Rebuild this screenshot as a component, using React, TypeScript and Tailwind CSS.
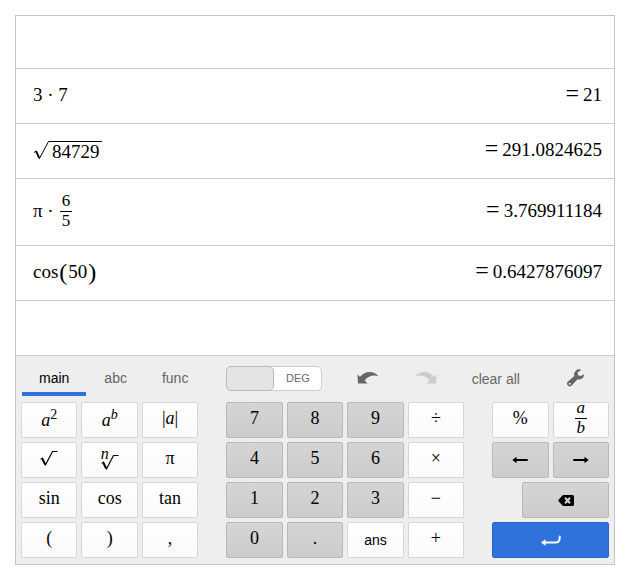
import React from "react";

const SERIF = "font-['Liberation_Serif',serif]";

function Undo({ flip = false }: { flip?: boolean }) {
  return (
    <svg width="22" height="14" viewBox="0 0 22 14" fill="currentColor" className={flip ? "-scale-x-100" : ""} aria-hidden="true">
      <path d="M0.5 3.5 L3 5.8 C7 0.5 16 -1.5 21.3 5 C16.5 3.6 11 4.6 7.6 9.6 L10.5 12.5 L1 12.5 Z" />
    </svg>
  );
}

function Wrench() {
  return (
    <svg width="18" height="18" viewBox="0 0 18 18" aria-hidden="true">
      <path
        fill="currentColor"
        fillRule="evenodd"
        d="M14.2 0.9 A5 5 0 0 0 7.3 6.9 L1 12.6 A2.6 2.6 0 0 0 4.7 16.6 L10.6 10.3 A5 5 0 0 0 17 5.2 L13.6 7 L11 6.3 L10.6 3.6 Z M2.8 13.7 a1 1 0 1 1 0 2 a1 1 0 0 1 0 -2 Z"
      />
    </svg>
  );
}

function KeyRadical() {
  return (
    <svg width="18" height="17" viewBox="0 0 18 17" fill="none" stroke="#000" aria-hidden="true">
      <path d="M0.5 9.2 L2.5 8" strokeWidth="1" />
      <path d="M2 8 L5.2 14.5" strokeWidth="2" />
      <path d="M5.2 15.5 L12.5 1.5 H17.5" strokeWidth="1.2" />
    </svg>
  );
}

function RootSign() {
  return (
    <svg width="17" height="19" viewBox="0 0 17 19" fill="none" stroke="#000" aria-hidden="true">
      <path d="M1 11.5 L3.2 10" strokeWidth="1" />
      <path d="M3 10 L6.2 16.8" strokeWidth="1.8" />
      <path d="M6.2 18 L15.5 0.5 H17" strokeWidth="1" />
    </svg>
  );
}

function Arrow({ flip = false }: { flip?: boolean }) {
  return (
    <svg width="16" height="8" viewBox="0 0 16 8" className={flip ? "-scale-x-100" : ""} aria-hidden="true">
      <path d="M3 4 H15" stroke="#000" strokeWidth="2" strokeLinecap="round" />
      <path d="M0.3 4 L4.5 0.8 V7.2 Z" fill="#000" />
    </svg>
  );
}

function Backspace() {
  return (
    <svg width="16" height="11" viewBox="0 0 16 11" aria-hidden="true">
      <path d="M5 0 H14.5 Q16 0 16 1.5 V9.5 Q16 11 14.5 11 H5 L0.3 6 V5 Z" fill="#000" />
      <path d="M7 2.8 L12 8.2 M12 2.8 L7 8.2" stroke="#d4d4d4" strokeWidth="2" />
    </svg>
  );
}

function Enter() {
  return (
    <svg width="20" height="11" viewBox="0 0 20 11" aria-hidden="true">
      <path d="M3 7.5 H15 Q18.8 7.5 18.8 1.5" fill="none" stroke="#fff" strokeWidth="2" strokeLinecap="round" />
      <path d="M0 7.5 L4.5 4.3 V10.7 Z" fill="#fff" />
    </svg>
  );
}

function Fraction({ top, bottom, italic = false }: { top: string; bottom: string; italic?: boolean }) {
  return (
    <span className={`inline-flex flex-col items-center text-[17px] leading-4 ${italic ? "italic" : ""}`}>
      <span className="border-b border-black px-0.5 pb-0.5">{top}</span>
      <span className="px-0.5 pt-px">{bottom}</span>
    </span>
  );
}

const light = "border-[#d8d8d8] from-white to-[#fafafa]";
const dark = "border-[#b8b8b8] from-[#d5d5d5] to-[#cccccc]";
const blue = "border-[#2766c8] from-[#2f72dc] to-[#2f72dc]";

type KeyProps = { children: React.ReactNode; tone?: string; place?: string; font?: string; label?: string };

function Key({ children, tone = light, place = "", font = `${SERIF} text-lg pb-1`, label }: KeyProps) {
  return (
    <button
      type="button"
      aria-label={label}
      className={`flex h-9 items-center justify-center rounded-xs border bg-linear-to-b leading-5 text-black ${tone} ${place} ${font}`}
    >
      {children}
    </button>
  );
}

function Row({ children, result, tall = false }: { children: React.ReactNode; result: string; tall?: boolean }) {
  return (
    <li className={`flex items-center justify-between border-b border-[#cccccc] pr-3 pb-0.5 pl-[17px] ${tall ? "h-[67px]" : "h-[55px]"}`}>
      <span className="flex items-center">{children}</span>
      <output className="flex items-baseline gap-1">
        <span className="text-2xl leading-5">=</span>
        <span>{result}</span>
      </output>
    </li>
  );
}

export default function App() {
  return (
    <main className="py-[15px] pr-4 pl-[15px] font-['Liberation_Sans',sans-serif]">
      <div className="border border-[#c4c4c4] bg-white">
        <ol className={`${SERIF} text-[19px] leading-6 text-black`}>
          <li className="h-[53px] border-b border-[#cccccc]" />
          <Row result="21">3 · 7</Row>
          <Row result="291.0824625">
            <RootSign />
            <span className="border-t border-black px-0.5 pt-px leading-[17px]">84729</span>
          </Row>
          <Row result="3.769911184" tall>
            <span className="pr-1.5">π ·</span>
            <Fraction top="6" bottom="5" />
          </Row>
          <Row result="0.6427876097">
            <span className="flex gap-px">
              <span>cos</span>
              <span className="text-2xl leading-6">(</span>
              <span>50</span>
              <span className="text-2xl leading-6">)</span>
            </span>
          </Row>
          <li className="h-[55px] border-b border-[#cccccc]">
            <input type="text" aria-label="Expression" className="h-full w-full px-[17px] outline-none" />
          </li>
        </ol>

        <section aria-label="Keypad" className="bg-[#eeeeee] px-[5px] pb-1.5">
          <div className="flex h-[46px] items-start text-sm text-[#666666]">
            <div role="tablist" className="flex gap-px pl-px">
              <button type="button" role="tab" aria-selected="true" className="h-10 border-b-4 border-[#2f72dc] px-[17px] pt-2 text-black">main</button>
              <button type="button" role="tab" aria-selected="false" className="h-10 border-b-4 border-transparent px-[17px] pt-2">abc</button>
              <button type="button" role="tab" aria-selected="false" className="h-10 border-b-4 border-transparent px-[17px] pt-2">func</button>
            </div>
            <div className="flex h-11 flex-1 items-center justify-between pr-6 pl-[21px]">
              <button type="button" role="switch" aria-checked="false" aria-label="Degrees" className="flex h-[25px] w-24 rounded-[5px] border border-[#cccccc] bg-white text-[11px]">
                <span className="-my-px -ml-px h-[25px] w-12 rounded-[5px] border border-[#bbbbbb] bg-[#e4e4e4]" />
                <span className="flex h-full flex-1 items-center justify-center pt-px">DEG</span>
              </button>
              <button type="button" aria-label="Undo"><Undo /></button>
              <button type="button" aria-label="Redo" className="text-[#cccccc]"><Undo flip /></button>
              <button type="button" className="pt-0.5 pr-3">clear all</button>
              <button type="button" aria-label="Settings"><Wrench /></button>
            </div>
          </div>

          <div className="grid grid-cols-[repeat(3,minmax(0,1fr))_20px_repeat(4,minmax(0,1fr))_20px_repeat(2,minmax(0,1fr))] gap-1">
            <Key font={`${SERIF} text-lg pt-0.5`}><span className="italic">a<sup className="text-sm not-italic">2</sup></span></Key>
            <Key font={`${SERIF} text-lg pt-0.5`}><span className="italic">a<sup className="text-sm">b</sup></span></Key>
            <Key><span>|<i>a</i>|</span></Key>
            <Key place="col-start-5" tone={dark}>7</Key>
            <Key tone={dark}>8</Key>
            <Key tone={dark}>9</Key>
            <Key>÷</Key>
            <Key place="col-start-10">%</Key>
            <Key><Fraction top="a" bottom="b" italic /></Key>

            <Key label="Square root"><KeyRadical /></Key>
            <Key label="Nth root" font={`${SERIF} text-base`}>
              <span className="-mr-2 pb-3 italic">n</span>
              <span className="pt-1"><KeyRadical /></span>
            </Key>
            <Key>π</Key>
            <Key place="col-start-5" tone={dark}>4</Key>
            <Key tone={dark}>5</Key>
            <Key tone={dark}>6</Key>
            <Key>×</Key>
            <Key place="col-start-10" tone={dark} font="" label="Left"><Arrow /></Key>
            <Key tone={dark} font="" label="Right"><Arrow flip /></Key>

            <Key>sin</Key>
            <Key>cos</Key>
            <Key>tan</Key>
            <Key place="col-start-5" tone={dark}>1</Key>
            <Key tone={dark}>2</Key>
            <Key tone={dark}>3</Key>
            <Key>−</Key>
            <div className="col-span-2 col-start-10 flex flex-col pl-[30px]">
              <Key tone={dark} font="" label="Backspace"><Backspace /></Key>
            </div>

            <Key>(</Key>
            <Key>)</Key>
            <Key>,</Key>
            <Key place="col-start-5" tone={dark}>0</Key>
            <Key tone={dark}>.</Key>
            <Key font="text-sm">ans</Key>
            <Key>+</Key>
            <Key place="col-start-10 col-span-2" tone={blue} font="" label="Enter"><Enter /></Key>
          </div>
        </section>
      </div>
    </main>
  );
}
